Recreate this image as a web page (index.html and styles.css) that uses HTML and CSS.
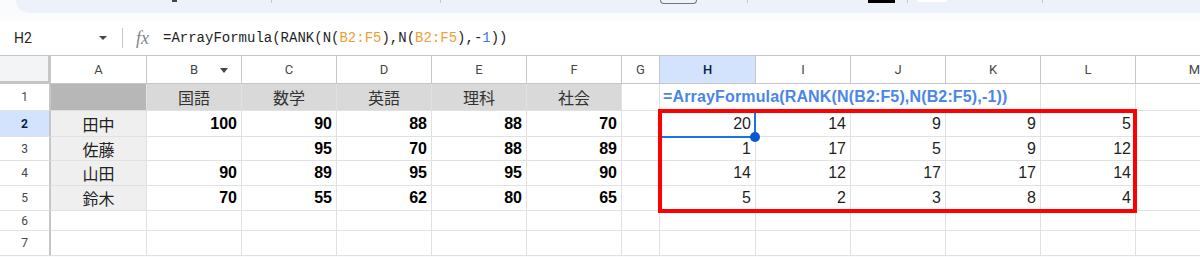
FILE: index.html
```html
<!DOCTYPE html>
<html lang="ja">
<head>
  <meta charset="UTF-8">
  <meta name="viewport" content="width=device-width, initial-scale=1.0">
  <title>RANK ArrayFormula</title>
  <link rel="stylesheet" href="styles.css">
</head>
<body>
  <!-- toolbar (cut off at the top) -->
  <div class="toolbar">
    <span class="tb-dash"></span>
    <span class="tb-tick t1"></span>
    <span class="tb-tick t2"></span>
    <span class="tb-box"></span>
    <span class="tb-tick t3"></span>
    <span class="tb-black"></span>
    <span class="tb-tick t4"></span>
    <span class="tb-white"></span>
    <span class="tb-tick t5"></span>
  </div>

  <!-- formula bar -->
  <div class="formula-bar">
    <div class="name-box">H2<span class="caret"></span></div>
    <div class="sep"></div>
    <div class="fx">fx</div>
    <div class="formula">=ArrayFormula(RANK(N(<span class="ref">B2:F5</span>),N(<span class="ref">B2:F5</span>),-<span class="num">1</span>))</div>
  </div>

  <div class="sheet">
    <div class="grid">
      <!-- header -->
      <div class="corner"></div>
      <div class="ch">A</div>
      <div class="ch filter">B</div>
      <div class="ch">C</div>
      <div class="ch">D</div>
      <div class="ch">E</div>
      <div class="ch">F</div>
      <div class="ch">G</div>
      <div class="ch active">H</div>
      <div class="ch">I</div>
      <div class="ch">J</div>
      <div class="ch">K</div>
      <div class="ch">L</div>
      <div class="ch">M</div>

      <!-- row 1 -->
      <div class="rh">1</div>
      <div class="cell dark"></div>
      <div class="cell subject">国語</div>
      <div class="cell subject">数学</div>
      <div class="cell subject">英語</div>
      <div class="cell subject">理科</div>
      <div class="cell subject">社会</div>
      <div class="cell"></div>
      <div class="cell formula-cell">=ArrayFormula(RANK(N(B2:F5),N(B2:F5),-1))</div>
      <div class="cell"></div>
      <div class="cell"></div>

      <!-- row 2 -->
      <div class="rh active">2</div>
      <div class="cell name">田中</div>
      <div class="cell score">100</div>
      <div class="cell score">90</div>
      <div class="cell score">88</div>
      <div class="cell score">88</div>
      <div class="cell score">70</div>
      <div class="cell"></div>
      <div class="cell">20</div>
      <div class="cell">14</div>
      <div class="cell">9</div>
      <div class="cell">9</div>
      <div class="cell">5</div>
      <div class="cell"></div>

      <!-- row 3 -->
      <div class="rh">3</div>
      <div class="cell name">佐藤</div>
      <div class="cell score"></div>
      <div class="cell score">95</div>
      <div class="cell score">70</div>
      <div class="cell score">88</div>
      <div class="cell score">89</div>
      <div class="cell"></div>
      <div class="cell">1</div>
      <div class="cell">17</div>
      <div class="cell">5</div>
      <div class="cell">9</div>
      <div class="cell">12</div>
      <div class="cell"></div>

      <!-- row 4 -->
      <div class="rh">4</div>
      <div class="cell name">山田</div>
      <div class="cell score">90</div>
      <div class="cell score">89</div>
      <div class="cell score">95</div>
      <div class="cell score">95</div>
      <div class="cell score">90</div>
      <div class="cell"></div>
      <div class="cell">14</div>
      <div class="cell">12</div>
      <div class="cell">17</div>
      <div class="cell">17</div>
      <div class="cell">14</div>
      <div class="cell"></div>

      <!-- row 5 -->
      <div class="rh">5</div>
      <div class="cell name">鈴木</div>
      <div class="cell score">70</div>
      <div class="cell score">55</div>
      <div class="cell score">62</div>
      <div class="cell score">80</div>
      <div class="cell score">65</div>
      <div class="cell"></div>
      <div class="cell">5</div>
      <div class="cell">2</div>
      <div class="cell">3</div>
      <div class="cell">8</div>
      <div class="cell">4</div>
      <div class="cell"></div>

      <!-- row 6 -->
      <div class="rh">6</div>
      <div class="cell"></div><div class="cell"></div><div class="cell"></div><div class="cell"></div>
      <div class="cell"></div><div class="cell"></div><div class="cell"></div><div class="cell"></div>
      <div class="cell"></div><div class="cell"></div><div class="cell"></div><div class="cell"></div>
      <div class="cell"></div>

      <!-- row 7 -->
      <div class="rh">7</div>
      <div class="cell"></div><div class="cell"></div><div class="cell"></div><div class="cell"></div>
      <div class="cell"></div><div class="cell"></div><div class="cell"></div><div class="cell"></div>
      <div class="cell"></div><div class="cell"></div><div class="cell"></div><div class="cell"></div>
      <div class="cell"></div>
    </div>

    <!-- selection on H2 and the red frame around the result -->
    <div class="selection"><span class="handle"></span></div>
    <div class="red-frame"></div>
  </div>
</body>
</html>
```

FILE: styles.css
```css
body {
  margin: 0;
  width: 1200px;
  height: 257px;
  overflow: hidden;
  background-color: #f9fbfd;
  font-family: Roboto, "Liberation Sans", sans-serif;
}

/* toolbar, only its lower edge is visible */
.toolbar {
  display: flex;
  align-items: flex-start;
  height: 13px;
  margin-left: 16px;
  background-color: #edf2fa;
  border-bottom-left-radius: 14px;
}
.tb-dash {
  width: 5px;
  height: 2px;
  margin-left: 156px;
  background-color: #444;
}
.tb-tick {
  width: 1px;
  height: 3px;
  background-color: #c4c7c5;
}
.t1 { margin-left: 94px; }
.t2 { margin-left: 168px; }
.t3 { margin-left: 50px; }
.t4 { margin-left: 12px; }
.t5 { margin-left: 95px; }
.tb-box {
  width: 35px;
  height: 3px;
  margin-left: 219px;
  border: 1px solid #747775;
  border-top: none;
  border-radius: 0 0 5px 5px;
}
.tb-black {
  width: 27px;
  height: 3px;
  margin-left: 120px;
  background-color: #000;
}
.tb-white {
  width: 29px;
  height: 2px;
  margin-left: 10px;
  background-color: #fff;
}

/* formula bar */
.formula-bar {
  display: flex;
  align-items: center;
  height: 34px;
  margin-top: 8px;
  background-color: #fff;
  border-bottom: 1px solid #c4c7c5;
}
.name-box {
  box-sizing: border-box;
  width: 122px;
  padding: 0 15px 0 14px;
  display: flex;
  align-items: center;
  font-size: 14px;
  color: #1f1f1f;
}
.caret {
  margin-left: auto;
  border-left: 4px solid transparent;
  border-right: 4px solid transparent;
  border-top: 4px solid #444746;
}
.sep {
  width: 1px;
  height: 20px;
  background-color: #c4c7c5;
}
.fx {
  width: 27px;
  margin-left: 13px;
  font-family: "Liberation Serif", serif;
  font-style: italic;
  font-size: 18px;
  color: #80868b;
}
.formula {
  font-family: "Liberation Mono", monospace;
  font-size: 14px;
  color: #1f1f1f;
}
.formula .ref {
  color: #f09d31;
}
.formula .num {
  color: #3b78e7;
}

/* sheet grid */
.sheet {
  position: relative;
}
.grid {
  display: grid;
  grid-template-columns: 51px 96px 95px 95px 95px 95px 95px 38px 96px 95px 95px 95px 95px 118px;
  grid-template-rows: 28px 27px 26px 24px 25px 25px 20px 25px;
}
.grid > div {
  box-sizing: border-box;
  display: flex;
  align-items: center;
  white-space: nowrap;
  overflow: visible;
}
.corner {
  background-color: #f3f4f5;
  border-right: 3px solid #c4c7c5;
  border-bottom: 3px solid #c4c7c5;
}
.ch {
  position: relative;
  justify-content: center;
  background-color: #fff;
  border-right: 1px solid #c4c7c5;
  border-bottom: 1px solid #c4c7c5;
  font-size: 13px;
  color: #444746;
}
.ch.filter::after {
  content: "";
  position: absolute;
  right: 13px;
  top: 12px;
  border-left: 4px solid transparent;
  border-right: 4px solid transparent;
  border-top: 5px solid #444746;
}
.rh {
  justify-content: center;
  background-color: #fff;
  border-right: 2px solid #c4c7c5;
  border-bottom: 1px solid #e1e1e1;
  font-size: 12px;
  color: #444746;
}
.ch.active,
.rh.active {
  background-color: #d3e3fd;
  color: #041e49;
  font-weight: bold;
}
.ch.active {
  font-weight: 500;
}

.cell {
  justify-content: flex-end;
  padding: 0 4px;
  background-color: #fff;
  border-right: 1px solid #e1e1e1;
  border-bottom: 1px solid #e1e1e1;
  font-family: "Liberation Sans", "Noto Sans CJK JP", sans-serif;
  font-size: 16px;
  color: #1f1f1f;
}
.cell.dark {
  background-color: #b7b7b7;
}
.cell.subject {
  justify-content: center;
  background-color: #d9d9d9;
  font-size: 16px;
  color: #333;
}
.cell.name {
  justify-content: center;
  background-color: #efefef;
  color: #222;
}
.cell.score {
  font-weight: bold;
  color: #000;
}
.cell.formula-cell {
  grid-column: span 4;
  justify-content: flex-start;
  padding-left: 3px;
  font-weight: bold;
  color: #4a86e8;
  letter-spacing: 0.15px;
}

/* overlays */
.selection {
  position: absolute;
  left: 659px;
  top: 54px;
  width: 97px;
  height: 28px;
  box-sizing: border-box;
  border: 2px solid #1a73e8;
}
.handle {
  position: absolute;
  right: -6px;
  bottom: -6px;
  width: 10px;
  height: 10px;
  border-radius: 50%;
  background-color: #0b57d0;
}
.red-frame {
  position: absolute;
  left: 658px;
  top: 53px;
  width: 479px;
  height: 104px;
  box-sizing: border-box;
  border: 4px solid #ff0000;
}
```
